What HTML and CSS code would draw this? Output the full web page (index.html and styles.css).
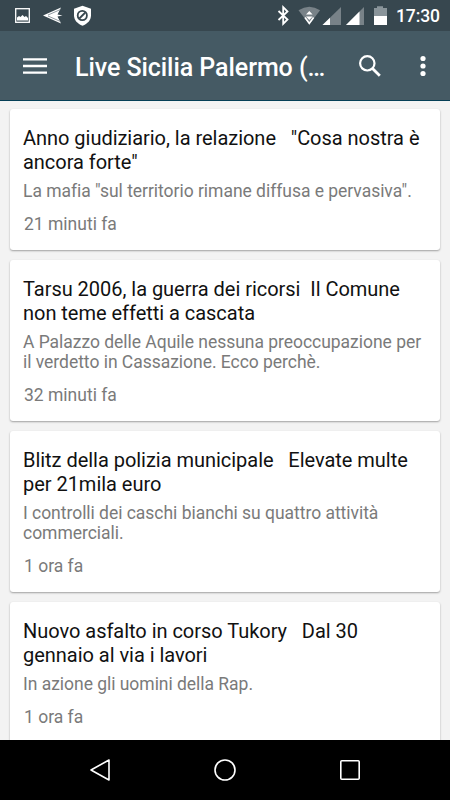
FILE: index.html
```html
<!DOCTYPE html>
<html lang="it">
<head>
  <meta charset="UTF-8" />
  <meta name="viewport" content="width=device-width, initial-scale=1.0"/>
  <title>Live Sicilia Palermo</title>
  <link rel="stylesheet" href="styles.css">
</head>
<body>
  <div class="statusbar">
    <svg class="status-left" width="80" height="31" viewBox="0 0 80 31">
      <rect x="3.7" y="8.7" width="13.6" height="13.6" fill="none" stroke="#fff" stroke-width="1.3"/>
      <path d="M5 20.5v-3l2-1.5 1.5 1 2-2 2 2 1.5-1 2 2v2.5z" fill="#fff"/>
      <path d="M31 15.5L49 7.5l-3.5 7 5 1-5 1L49 23.5z" fill="#fff"/>
      <path d="M36 15L48.5 9.5M36 16L48.5 21.5" stroke="#76838a" stroke-width=".8"/>
      <path d="M70.5 5.8l8.5 3v6.5c0 5-3.5 8.5-8.5 10.5-5-2-8.5-5.5-8.5-10.5V8.8z" fill="#fff"/>
      <circle cx="70.3" cy="15.5" r="4.6" fill="none" stroke="#37474f" stroke-width="1.8"/>
      <path d="M67.3 18.5l6-6" stroke="#37474f" stroke-width="1.8"/>
    </svg>
    <div class="status-right">
      <svg width="112" height="31" viewBox="0 0 112 31">
        <path d="M2.5 11l9 8.5-4.3 4.3V7.2l4.3 4.3-9 8.5" fill="none" stroke="#fff" stroke-width="1.8"/>
        <path d="M22.5 10.2q10.8-7 21.6 0L33.3 24.5z" fill="#788288"/>
        <path d="M30 14.6l3.3-3.7 3.3 3.7zM30 16.5h6.6L33.3 20z" fill="#fff"/>
        <path d="M29 17.5l4.3 6 4.3-6" fill="none" stroke="#fff" stroke-width="1.6"/>
        <path d="M46.5 25L65 7v18z" fill="#788288"/>
        <path d="M46.5 25l7.5-7.2V25z" fill="#fff"/>
        <path d="M70 25L88 7v18z" fill="#788288"/>
        <path d="M70 25l13.5-13.5V25z" fill="#fff"/>
        <path d="M98 8h3V6.2h6V8h4v8.5H98z" fill="#89949a"/>
        <path d="M98 16h13v9H98z" fill="#fff"/>
      </svg>
      <span class="clock">17:30</span>
    </div>
  </div>

  <header class="toolbar">
    <svg class="menu" width="24" height="18" viewBox="0 0 24 18">
      <path d="M0 2.3h24M0 9h24M0 15.7h24" stroke="#fff" stroke-width="2.3"/>
    </svg>
    <h1>Live Sicilia Palermo (…</h1>
    <svg class="search" width="24" height="24" viewBox="0 0 24 24">
      <circle cx="9.3" cy="9.3" r="7.2" fill="none" stroke="#fff" stroke-width="2.2"/>
      <path d="M14.5 14.5l7.3 7.3" stroke="#fff" stroke-width="2.8"/>
    </svg>
    <svg class="more" width="6" height="22" viewBox="0 0 6 22">
      <g fill="#fff"><circle cx="3" cy="3.5" r="2.6"/><circle cx="3" cy="11" r="2.6"/><circle cx="3" cy="18.5" r="2.6"/></g>
    </svg>
  </header>

  <main class="feed">
    <article class="card">
      <h2>Anno giudiziario, la relazione   "Cosa nostra è<br>ancora forte"</h2>
      <p>La mafia "sul territorio rimane diffusa e pervasiva".</p>
      <time>21 minuti fa</time>
    </article>
    <article class="card">
      <h2>Tarsu 2006, la guerra dei ricorsi  Il Comune<br>non teme effetti a cascata</h2>
      <p>A Palazzo delle Aquile nessuna preoccupazione per<br>il verdetto in Cassazione. Ecco perchè.</p>
      <time>32 minuti fa</time>
    </article>
    <article class="card">
      <h2>Blitz della polizia municipale   Elevate multe<br>per 21mila euro</h2>
      <p>I controlli dei caschi bianchi su quattro attività<br>commerciali.</p>
      <time>1 ora fa</time>
    </article>
    <article class="card">
      <h2>Nuovo asfalto in corso Tukory   Dal 30<br>gennaio al via i lavori</h2>
      <p>In azione gli uomini della Rap.</p>
      <time>1 ora fa</time>
    </article>
  </main>

  <nav class="navbar">
    <svg width="24" height="24" viewBox="0 0 24 24">
      <path d="M21 2v20L3 12z" fill="none" stroke="#fff" stroke-width="1.6" stroke-linejoin="round"/>
    </svg>
    <svg width="24" height="24" viewBox="0 0 24 24">
      <circle cx="12" cy="12" r="10" fill="none" stroke="#fff" stroke-width="1.6"/>
    </svg>
    <svg width="24" height="24" viewBox="0 0 24 24">
      <rect x="2.8" y="2.8" width="18.4" height="18.4" rx="1" fill="none" stroke="#fff" stroke-width="1.6"/>
    </svg>
  </nav>
</body>
</html>
```

FILE: styles.css
```css
* {
  box-sizing: border-box;
}

body {
  margin: 0;
  height: 800px;
  display: flex;
  flex-direction: column;
  overflow: hidden;
  font-family: Roboto, sans-serif;
  background: #f3f3f3;
}

svg {
  display: block;
  flex: none;
}

.statusbar {
  height: 31px;
  flex: none;
  display: flex;
  justify-content: space-between;
  padding: 0 10px 0 12px;
  background: #37474f;
}

.status-right {
  display: flex;
}

.clock {
  margin-left: 8px;
  width: 44px;
  font-size: 17.5px;
  font-weight: 500;
  line-height: 33px;
  letter-spacing: -0.1px;
  color: #fff;
  white-space: nowrap;
}

.toolbar {
  height: 70px;
  flex: none;
  display: flex;
  align-items: center;
  padding: 0 24px 0 23px;
  background: #455a64;
  border-bottom: 1px solid #053f56;
}

.toolbar h1 {
  margin: 5px 0 0 28px;
  width: 283px;
  font-size: 25px;
  font-weight: 500;
  line-height: 30px;
  letter-spacing: -0.06px;
  color: #fff;
  white-space: nowrap;
}

.more {
  margin-left: auto;
}

.feed {
  flex: 1;
  min-height: 0;
  overflow: hidden;
  padding: 8px 10px 0;
}

.card {
  margin-bottom: 10px;
  padding: 17px 13px 15.5px;
  background: #fff;
  border-radius: 3px;
  box-shadow: 0 1px 2px rgba(0, 0, 0, 0.35);
}

.card h2 {
  margin: 0;
  font-size: 20px;
  font-weight: 400;
  line-height: 24px;
  letter-spacing: -0.03px;
  color: #111;
  white-space: pre;
}

.card p {
  margin: 7px 0 13px;
  font-size: 17.5px;
  line-height: 20px;
  letter-spacing: -0.03px;
  color: #7a7a7a;
  white-space: pre;
}

.card time {
  display: block;
  margin-left: 1px;
  font-size: 17.5px;
  line-height: 20.5px;
  color: #7a7a7a;
}

.navbar {
  height: 60px;
  flex: none;
  display: flex;
  align-items: center;
  justify-content: center;
  gap: 101px;
  background: #000;
}
```
